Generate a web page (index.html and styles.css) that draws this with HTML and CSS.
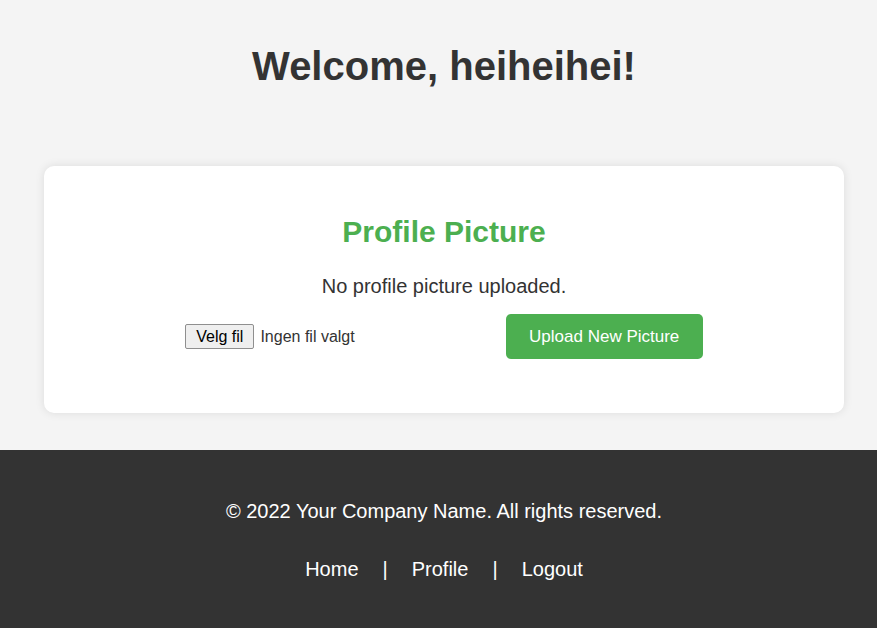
FILE: index.html
```html
<!DOCTYPE html>
<html lang="no">
<head>
<meta charset="utf-8">
<title>Profile</title>
<link rel="stylesheet" href="styles.css">
</head>
<body>
<header class="header">
  <h1 class="title">Welcome, heiheihei!</h1>
</header>
<main class="main">
  <section class="card">
    <h2 class="card-title">Profile Picture</h2>
    <p class="card-text">No profile picture uploaded.</p>
    <form class="upload-form">
      <label class="file-input">
        <input class="file-native" type="file" name="picture">
        <span class="file-button">Velg fil</span>
        <span class="file-label">Ingen fil valgt</span>
      </label>
      <button class="upload-button" type="button">Upload New Picture</button>
    </form>
  </section>
</main>
<footer class="footer">
  <p class="copyright">© 2022 Your Company Name. All rights reserved.</p>
  <nav class="footer-nav">
    <a class="footer-link" href="#">Home</a><span class="sep">|</span><a class="footer-link" href="#">Profile</a><span class="sep">|</span><a class="footer-link" href="#">Logout</a>
  </nav>
</footer>
</body>
</html>
```
FILE: styles.css
```css
html, body {
  margin: 0;
  padding: 0;
}
body {
  background: #f4f4f4;
  color: #333;
  font-family: "Liberation Sans", Arial, sans-serif;
  font-size: 16px;
}
.header {
  padding: 43px 0 0 11px;
  text-align: center;
}
.title {
  margin: 0;
  font-size: 40px;
  font-weight: bold;
  line-height: 46px;
  color: #333;
}
.main {
  padding: 77px 0 37px 11px;
}
.card {
  max-width: 800px;
  margin: 0 auto;
  background: #fff;
  border-radius: 10px;
  box-shadow: 0 0 10px rgba(0, 0, 0, 0.1);
  padding: 49px 20px 54px;
  text-align: center;
  box-sizing: border-box;
}
.card-title {
  margin: 0;
  font-size: 30px;
  line-height: 34px;
  color: #4caf50;
}
.card-text {
  margin: 26px 0 0;
  font-size: 20px;
  line-height: 23px;
  color: #333;
}
.upload-form {
  margin-top: 16px;
  display: flex;
  justify-content: center;
  align-items: center;
  gap: 151px;
}
.file-input {
  display: flex;
  align-items: center;
  gap: 6px;
  font-size: 16px;
  color: #333;
  cursor: pointer;
}
.file-native {
  display: none;
}
.file-button {
  display: inline-block;
  box-sizing: border-box;
  height: 25px;
  padding: 2px 10px;
  line-height: 19px;
  border: 1px solid #8f8f8f;
  border-radius: 2px;
  background: #efefef;
  color: #000;
}
.file-label {
  color: #333;
}
.upload-button {
  box-sizing: border-box;
  height: 45px;
  width: 197px;
  padding: 0;
  border: none;
  border-radius: 5px;
  background: #4caf50;
  color: #fff;
  font-family: "Liberation Sans", Arial, sans-serif;
  font-size: 17px;
  line-height: 45px;
  cursor: pointer;
}
.footer {
  background: #333;
  color: #fff;
  text-align: center;
  padding: 50px 0 48px 11px;
}
.copyright {
  margin: 0;
  font-size: 20px;
  line-height: 23px;
}
.footer-nav {
  margin-top: 35px;
  font-size: 20px;
  line-height: 23px;
}
.footer-link {
  color: #fff;
  text-decoration: none;
}
.sep {
  margin: 0 24px;
}
```
